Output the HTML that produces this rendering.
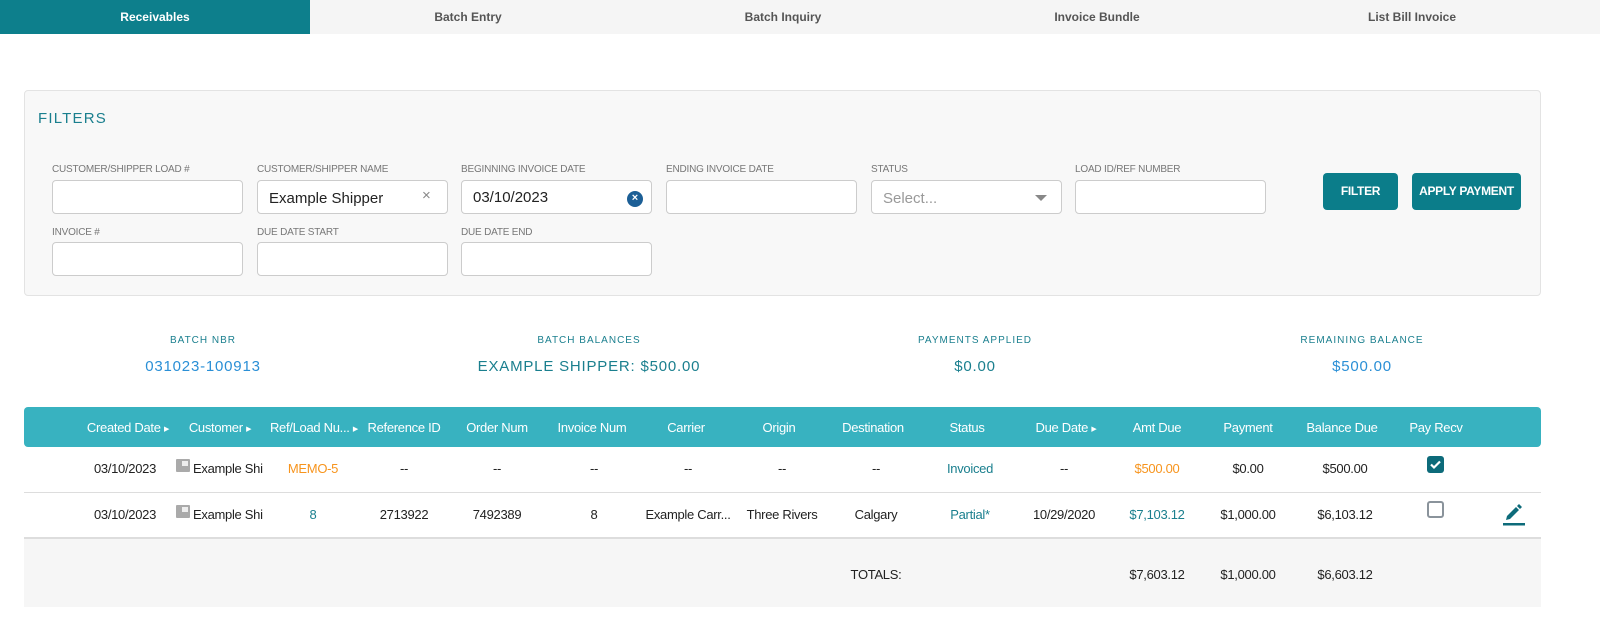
<!DOCTYPE html>
<html><head><meta charset="utf-8"><style>
*{box-sizing:border-box;margin:0;padding:0}
body{width:1600px;height:620px;background:#fff;font-family:"Liberation Sans",sans-serif;position:relative;overflow:hidden;color:#222}
.a{position:absolute}
.tabs{position:absolute;left:0;top:0;width:1600px;height:34px;background:#f5f5f5}
.tab{position:absolute;top:0;height:34px;line-height:34px;text-align:center;font-size:12px;font-weight:bold;color:#555}
.tab.on{background:#0d7f8c;color:#fff}
.box{left:24px;top:90px;width:1517px;height:206px;background:#f8f8f8;border:1px solid #e3e3e3;border-radius:4px}
.lbl{font-size:10px;color:#777;letter-spacing:-0.2px}
.in{width:191px;height:34px;background:#fff;border:1px solid #ccc;border-radius:4px}
.btn{background:#0b7d8a;color:#fff;font-size:12px;font-weight:bold;text-align:center;line-height:37px;border-radius:4px;height:37px;letter-spacing:-0.3px}
.sl{font-size:10px;letter-spacing:1px;color:#1a7f8e;text-align:center;width:400px}
.sv{font-size:15px;letter-spacing:0.8px;text-align:center;width:400px}
.th{position:absolute;left:24px;top:407px;width:1517px;height:40px;background:#38b2c0;border-radius:4px}
.c{position:absolute;width:120px;text-align:center;font-size:13px;letter-spacing:-0.3px;transform:translateX(-60px);white-space:nowrap}
.h{color:#fff;top:420px}
.tri{font-size:7px;vertical-align:1px}
</style></head><body>
<div class="tabs">
<div class="tab on" style="left:0;width:310px">Receivables</div>
<div class="tab" style="left:310px;width:316px">Batch Entry</div>
<div class="tab" style="left:626px;width:314px">Batch Inquiry</div>
<div class="tab" style="left:940px;width:314px">Invoice Bundle</div>
<div class="tab" style="left:1254px;width:316px">List Bill Invoice</div>
</div>
<div class="a box"></div>
<div class="a" style="left:38px;top:110px;font-size:15px;letter-spacing:1.2px;color:#1a7f8e">FILTERS</div>

<div class="a lbl" style="left:52px;top:164px">CUSTOMER/SHIPPER LOAD #</div>
<div class="a lbl" style="left:257px;top:164px">CUSTOMER/SHIPPER NAME</div>
<div class="a lbl" style="left:461px;top:164px">BEGINNING INVOICE DATE</div>
<div class="a lbl" style="left:666px;top:164px">ENDING INVOICE DATE</div>
<div class="a lbl" style="left:871px;top:164px">STATUS</div>
<div class="a lbl" style="left:1075px;top:164px">LOAD ID/REF NUMBER</div>
<div class="a in" style="left:52px;top:180px"></div>
<div class="a in" style="left:257px;top:180px"><span class="a" style="left:11px;top:9px;font-size:15px;color:#222">Example Shipper</span><span class="a" style="left:164px;top:6px;font-size:15px;color:#888">×</span></div>
<div class="a in" style="left:461px;top:180px"><span class="a" style="left:11px;top:8px;font-size:15px;color:#222">03/10/2023</span><span class="a" style="left:165px;top:10px;width:16px;height:16px;border-radius:8px;background:#1c5f96;color:#fff;font-size:11px;line-height:15px;text-align:center;font-weight:bold">×</span></div>
<div class="a in" style="left:666px;top:180px"></div>
<div class="a in" style="left:871px;top:180px"><span class="a" style="left:11px;top:9px;font-size:15px;color:#999">Select...</span><span class="a" style="left:163px;top:14px;width:0;height:0;border-left:6px solid transparent;border-right:6px solid transparent;border-top:6px solid #888"></span></div>
<div class="a in" style="left:1075px;top:180px"></div>
<div class="a btn" style="left:1323px;top:173px;width:75px">FILTER</div>
<div class="a btn" style="left:1412px;top:173px;width:109px">APPLY PAYMENT</div>

<div class="a lbl" style="left:52px;top:227px">INVOICE #</div>
<div class="a lbl" style="left:257px;top:227px">DUE DATE START</div>
<div class="a lbl" style="left:461px;top:227px">DUE DATE END</div>
<div class="a in" style="left:52px;top:242px"></div>
<div class="a in" style="left:257px;top:242px"></div>
<div class="a in" style="left:461px;top:242px"></div>

<div class="a sl" style="left:3px;top:335px">BATCH NBR</div>
<div class="a sl" style="left:389px;top:335px">BATCH BALANCES</div>
<div class="a sl" style="left:775px;top:335px">PAYMENTS APPLIED</div>
<div class="a sl" style="left:1162px;top:335px">REMAINING BALANCE</div>
<div class="a sv" style="left:3px;top:358px;color:#2a8fd6">031023-100913</div>
<div class="a sv" style="left:389px;top:358px;color:#1a7f8e">EXAMPLE SHIPPER: $500.00</div>
<div class="a sv" style="left:775px;top:358px;color:#1a7f8e">$0.00</div>
<div class="a sv" style="left:1162px;top:358px;color:#2a8fd6">$500.00</div>

<div class="th"></div>
<div class="c h" style="left:128px">Created Date <span class="tri">▶</span></div>
<div class="c h" style="left:220px">Customer <span class="tri">▶</span></div>
<div class="c h" style="left:314px">Ref/Load Nu... <span class="tri">▶</span></div>
<div class="c h" style="left:404px">Reference ID</div>
<div class="c h" style="left:497px">Order Num</div>
<div class="c h" style="left:592px">Invoice Num</div>
<div class="c h" style="left:686px">Carrier</div>
<div class="c h" style="left:779px">Origin</div>
<div class="c h" style="left:873px">Destination</div>
<div class="c h" style="left:967px">Status</div>
<div class="c h" style="left:1066px">Due Date <span class="tri">▶</span></div>
<div class="c h" style="left:1157px">Amt Due</div>
<div class="c h" style="left:1248px">Payment</div>
<div class="c h" style="left:1342px">Balance Due</div>
<div class="c h" style="left:1436px">Pay Recv</div>

<div class="a" style="left:24px;top:492px;width:1517px;height:1px;background:#ddd"></div>
<div class="a" style="left:24px;top:537px;width:1517px;height:70px;background:#f6f6f6;border-top:2px solid #ddd"></div>

<!-- row1 -->
<div class="c" style="left:125px;top:461px">03/10/2023</div>
<div class="a" style="left:176px;top:459px;width:14px;height:13px;background:#aaa;border-radius:1px"><div class="a" style="left:6px;top:2px;width:6px;height:5px;background:#eee"></div></div>
<div class="a" style="left:193px;top:461px;font-size:13px;letter-spacing:-0.3px">Example Shi</div>
<div class="c" style="left:313px;top:461px;color:#f7941d">MEMO-5</div>
<div class="c" style="left:404px;top:461px">--</div>
<div class="c" style="left:497px;top:461px">--</div>
<div class="c" style="left:594px;top:461px">--</div>
<div class="c" style="left:688px;top:461px">--</div>
<div class="c" style="left:782px;top:461px">--</div>
<div class="c" style="left:876px;top:461px">--</div>
<div class="c" style="left:970px;top:461px;color:#1a7f8e">Invoiced</div>
<div class="c" style="left:1064px;top:461px">--</div>
<div class="c" style="left:1157px;top:461px;color:#f7941d">$500.00</div>
<div class="c" style="left:1248px;top:461px">$0.00</div>
<div class="c" style="left:1345px;top:461px">$500.00</div>
<div class="a" style="left:1427px;top:456px;width:17px;height:17px;background:#0d6b7a;border-radius:3px"><svg width="17" height="17" viewBox="0 0 17 17"><path d="M4 8.5l3 3 6-6" stroke="#fff" stroke-width="2.2" fill="none"/></svg></div>

<!-- row2 -->
<div class="c" style="left:125px;top:507px">03/10/2023</div>
<div class="a" style="left:176px;top:505px;width:14px;height:13px;background:#aaa;border-radius:1px"><div class="a" style="left:6px;top:2px;width:6px;height:5px;background:#eee"></div></div>
<div class="a" style="left:193px;top:507px;font-size:13px;letter-spacing:-0.3px">Example Shi</div>
<div class="c" style="left:313px;top:507px;color:#1a7f8e">8</div>
<div class="c" style="left:404px;top:507px">2713922</div>
<div class="c" style="left:497px;top:507px">7492389</div>
<div class="c" style="left:594px;top:507px">8</div>
<div class="c" style="left:688px;top:507px">Example Carr...</div>
<div class="c" style="left:782px;top:507px">Three Rivers</div>
<div class="c" style="left:876px;top:507px">Calgary</div>
<div class="c" style="left:970px;top:507px;color:#1a7f8e">Partial*</div>
<div class="c" style="left:1064px;top:507px">10/29/2020</div>
<div class="c" style="left:1157px;top:507px;color:#1a7f8e">$7,103.12</div>
<div class="c" style="left:1248px;top:507px">$1,000.00</div>
<div class="c" style="left:1345px;top:507px">$6,103.12</div>
<div class="a" style="left:1427px;top:501px;width:17px;height:17px;border:2px solid #8a939b;border-radius:3px;background:#fff"></div>
<svg class="a" style="left:1503px;top:503px" width="22" height="24" viewBox="0 0 22 24"><path d="M3 17l1-4 9-9 3 3-9 9z M14 3l2-2 3 3-2 2z" fill="#0d6b7a"/><rect x="0" y="20" width="22" height="2.5" fill="#0d6b7a"/></svg>

<div class="c" style="left:876px;top:567px">TOTALS:</div>
<div class="c" style="left:1157px;top:567px">$7,603.12</div>
<div class="c" style="left:1248px;top:567px">$1,000.00</div>
<div class="c" style="left:1345px;top:567px">$6,603.12</div>
</body></html>
